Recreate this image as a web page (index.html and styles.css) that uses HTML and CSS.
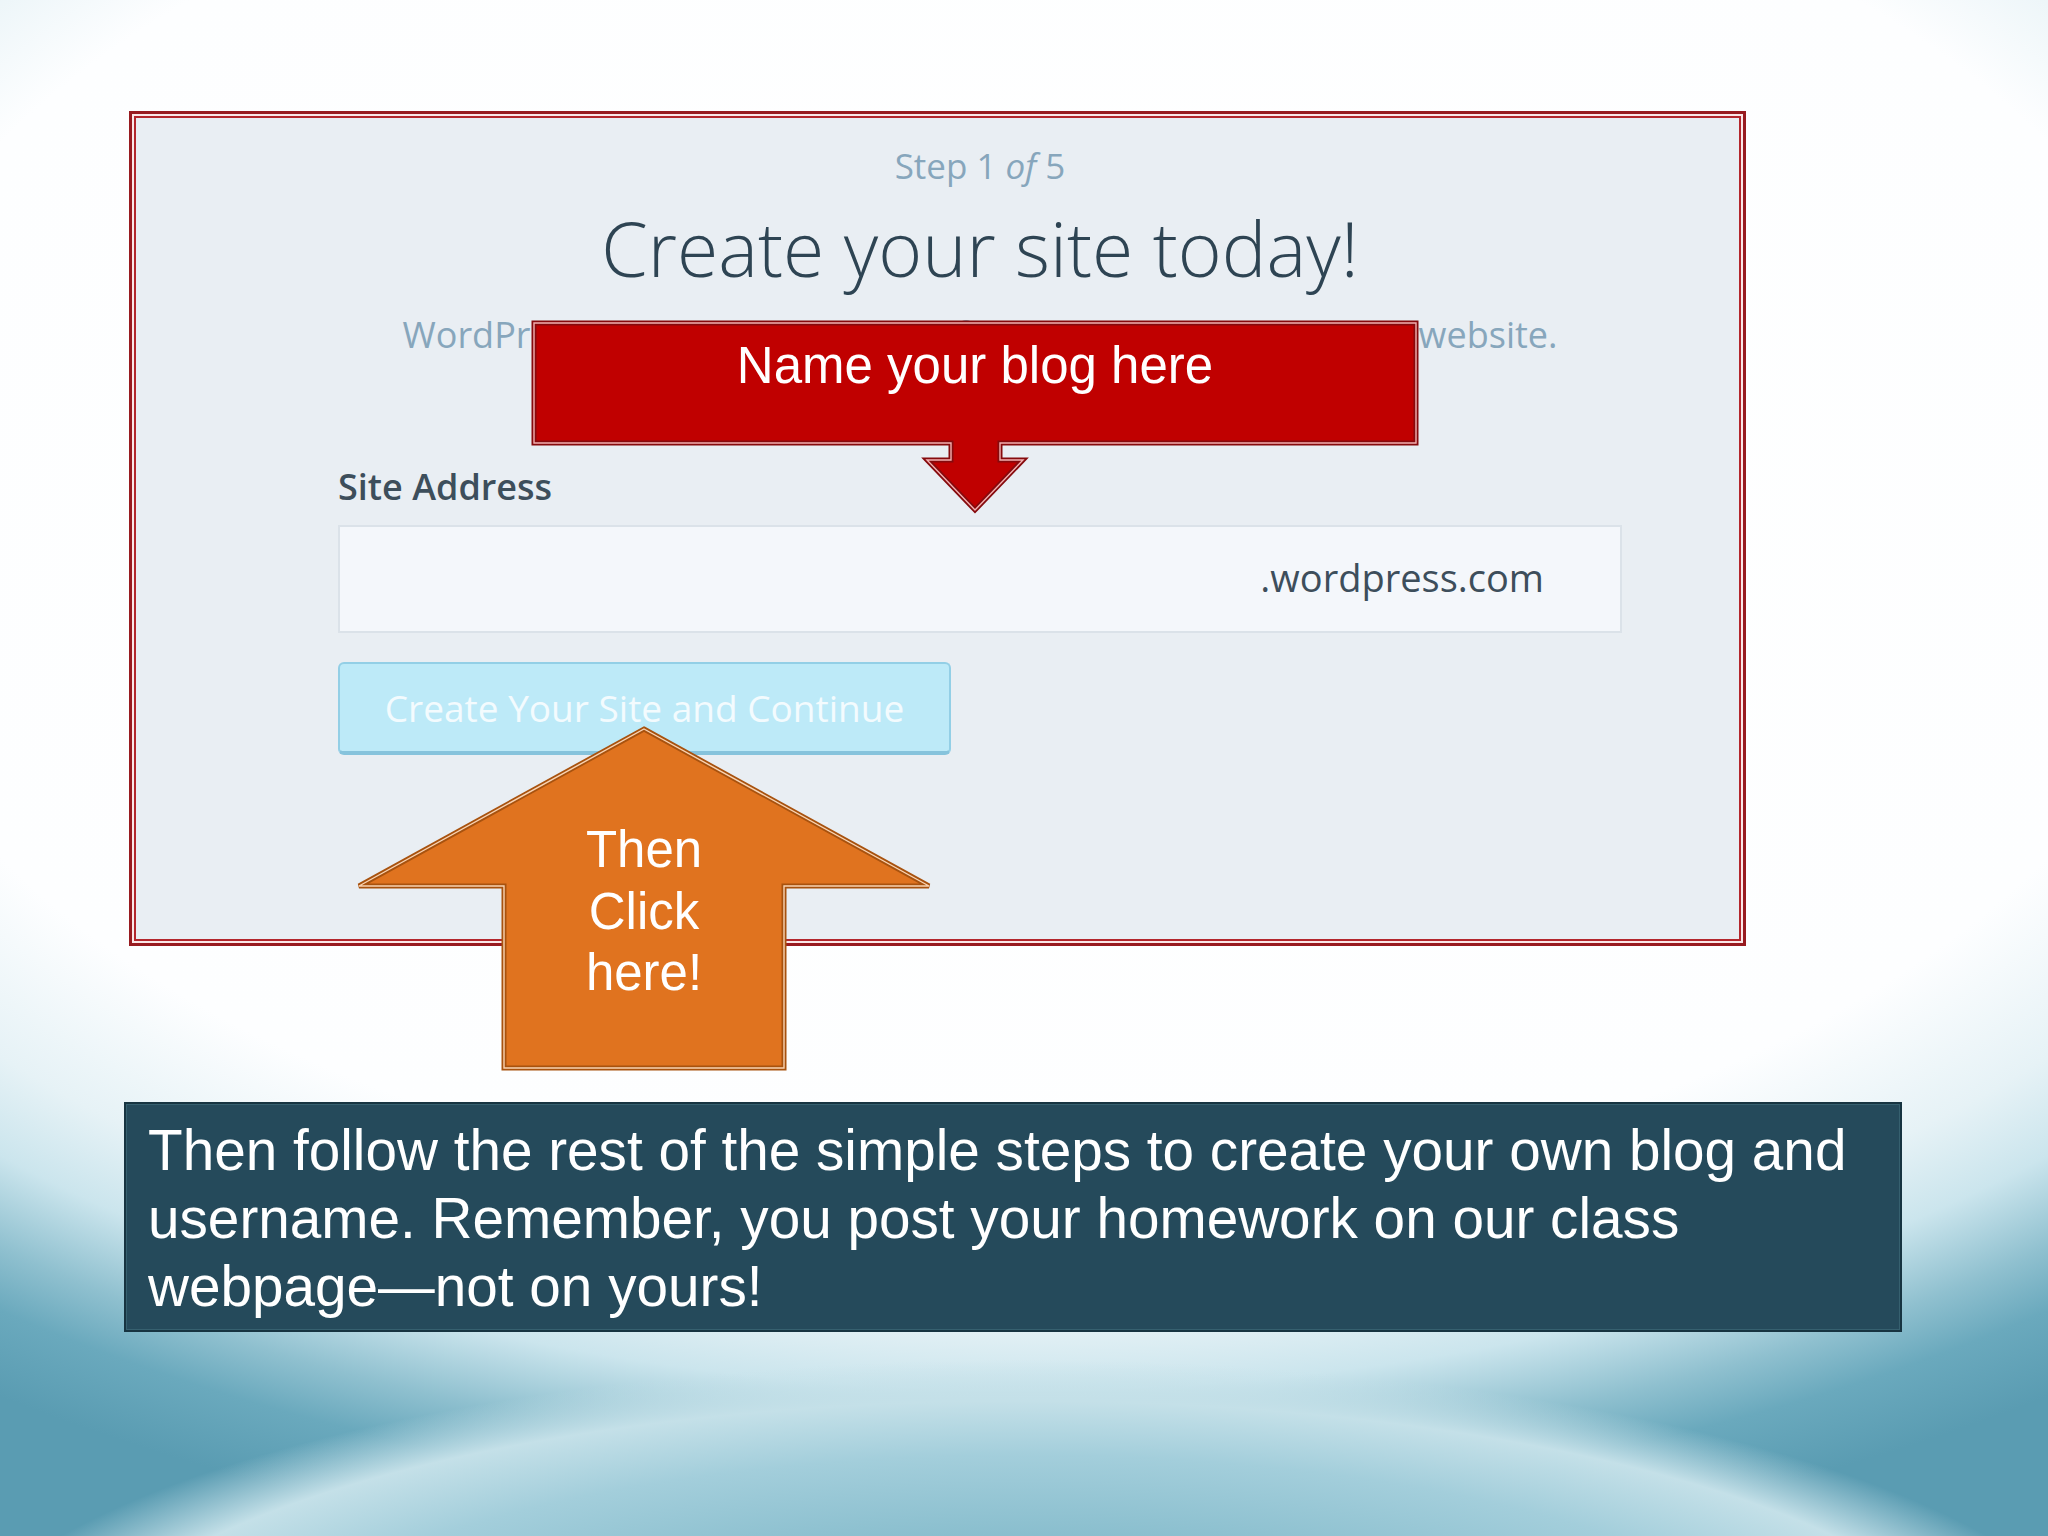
FILE: index.html
```html
<!DOCTYPE html>
<html lang="en">
<head>
<meta charset="utf-8">
<title>Create your site today!</title>
<link rel="stylesheet" href="styles.css">
</head>
<body>
<div class="slide">
  <div class="wp-box">
    <div class="form">
      <p class="step">Step 1 <em>of</em> 5</p>
      <h1 class="title">Create your site today!</h1>
      <p class="subtitle">WordPress.com is the best place for your WordPress blog or website.</p>
      <div class="label">Site Address</div>
      <div class="address"><span>.wordpress.com</span></div>
      <div class="cta">Create Your Site and Continue</div>
    </div>
  </div>

  <div class="note">Then follow the rest of the simple steps to create your own blog and username. Remember, you post your homework on our class webpage—not on yours!</div>

  <svg class="shapes" viewBox="0 0 2048 1536" width="2048" height="1536" aria-hidden="true">
    <g class="red-shape">
      <polygon class="edge" points="534,323 1416,323 1416,443 1000,443 1000,460 1023,460 975,510 927,460 951,460 951,443 534,443"/>
      <polygon class="hi" points="534,323 1416,323 1416,443 1000,443 1000,460 1023,460 975,510 927,460 951,460 951,443 534,443"/>
    </g>
    <g class="orange-shape">
      <polygon class="edge" points="644,729 929,886 784,886 784,1068 504,1068 504,886 359,886"/>
      <polygon class="hi" points="644,729 929,886 784,886 784,1068 504,1068 504,886 359,886"/>
    </g>
  </svg>
  <div class="callout-red-text">Name your blog here</div>
  <div class="callout-orange-text">Then<br>Click<br>here!</div>
</div>
</body>
</html>
```

FILE: styles.css
```css
html, body {
  margin: 0;
  padding: 0;
}

body {
  width: 2048px;
  height: 1536px;
  overflow: hidden;
}

.slide {
  position: relative;
  width: 2048px;
  height: 1536px;
  box-sizing: border-box;
  padding-top: 111px;
  background:
    radial-gradient(ellipse 1100px 340px at 1024px 1700px, #7db4c6 0%, #86bccc 45%, #a3cedb 72%, #c4e0e8 88%, rgba(205, 229, 236, 0) 100%),
    radial-gradient(ellipse 1700px 1000px at 1024px 500px, #ffffff 0%, #fdfeff 70%, #e6f2f6 82%, #cbe5ed 89%, #8fc0cf 96%, #6aa9bd 101%, #5a9cb2 108%);
  font-family: "Open Sans", "Liberation Sans", sans-serif;
}

/* ---------- WordPress screenshot box ---------- */
.wp-box {
  margin-left: 129px;
  width: 1617px;
  height: 835px;
  box-sizing: border-box;
  border: 3px solid #981b20;
  box-shadow: inset 0 0 0 2px #fbe7e8, inset 0 0 0 4px #b3262c;
  background: #e9eef3;
}

.form {
  margin-left: 206px;
  width: 1284px;
  padding-top: 30px;
  display: flex;
  flex-direction: column;
}

.step {
  margin: 0;
  font-size: 35px;
  line-height: 44px;
  color: #87a6bc;
  text-align: center;
  font-weight: 400;
}

.step em {
  font-style: italic;
}

.title {
  margin: 15px 0 0;
  font-size: 75px;
  line-height: 90px;
  font-weight: 300;
  color: #2e4453;
  text-align: center;
}

.subtitle {
  margin: 20px 0 0;
  font-size: 36px;
  line-height: 44px;
  color: #87a6bc;
  text-align: center;
}

.label {
  margin-top: 108px;
  font-size: 36px;
  line-height: 44px;
  font-weight: 600;
  color: #3d4e5b;
}

.address {
  margin-top: 16px;
  height: 108px;
  box-sizing: border-box;
  border: 2px solid #dbe2e9;
  background: #f4f7fb;
  display: flex;
  align-items: center;
  justify-content: flex-end;
  padding-right: 76px;
  padding-bottom: 4px;
  font-size: 38px;
  color: #3d4e5b;
}

.cta {
  margin-top: 29px;
  width: 613px;
  height: 93px;
  box-sizing: border-box;
  background: #bdeaf8;
  border: 2px solid #93cfe6;
  border-bottom: 4px solid #86c3dc;
  border-radius: 6px;
  display: flex;
  align-items: center;
  justify-content: center;
  font-size: 37px;
  color: #f3fbfe;
}

/* ---------- bottom note ---------- */
.note {
  margin-top: 156px;
  margin-left: 124px;
  width: 1778px;
  height: 230px;
  box-sizing: border-box;
  background: #254a5b;
  border: 2px solid #173441;
  box-shadow: inset 0 0 0 1px #36606f;
  padding: 13px 16px 0 22px;
  font-family: "Liberation Sans", Arial, sans-serif;
  font-size: 56.7px;
  line-height: 68px;
  color: #ffffff;
}

/* ---------- callout arrows (overlay) ---------- */
.shapes {
  position: absolute;
  left: 0;
  top: 0;
  pointer-events: none;
}

.red-shape .edge {
  fill: #c00000;
  stroke: #860a0d;
  stroke-width: 5;
  stroke-linejoin: miter;
}

.red-shape .hi {
  fill: none;
  stroke: #f4b1b1;
  stroke-width: 1.4;
}

.orange-shape .edge {
  fill: #e0731f;
  stroke: #a8520e;
  stroke-width: 5;
}

.orange-shape .hi {
  fill: none;
  stroke: #f9d3b2;
  stroke-width: 1.4;
}

.callout-red-text,
.callout-orange-text {
  position: absolute;
  font-family: "Liberation Sans", Arial, sans-serif;
  font-size: 51px;
  color: #ffffff;
  text-align: center;
}

.callout-red-text {
  left: 534px;
  top: 335px;
  width: 882px;
  line-height: 61px;
}

.callout-orange-text {
  left: 504px;
  top: 819px;
  width: 280px;
  line-height: 61.5px;
}
```
